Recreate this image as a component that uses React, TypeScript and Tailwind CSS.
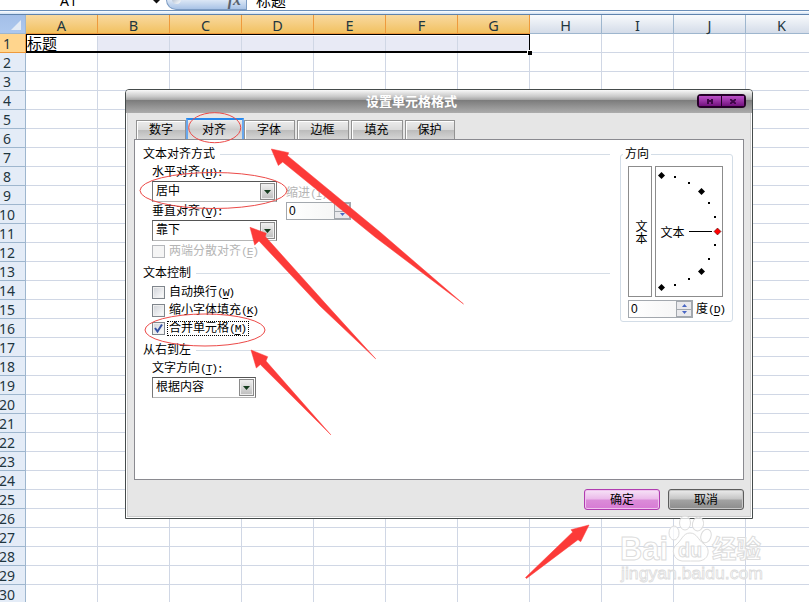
import React from "react";

const columns = ["A", "B", "C", "D", "E", "F", "G", "H", "I", "J", "K"];
const rows = Array.from({ length: 30 }, (_, i) => i + 1);

function FormulaBar() {
  return (
    <div className="flex h-[11px] shrink-0 overflow-hidden border-b border-[#6b8fb9] bg-white text-[15px] leading-[18px]">
      <div className="flex w-[166px] items-start">
        <span className="-mt-[8px] ml-[60px] w-[92px] font-['Noto_Sans',sans-serif] text-[14px]">A1</span>
        <svg width="9" height="4" viewBox="0 0 9 4">
          <path d="M1 0h7L4.500 3.500z" fill="#111" />
        </svg>
      </div>
      <div className="flex w-[81px] justify-between rounded-bl-[10px] border-b border-l border-r border-[#7d9cc4] bg-gradient-to-b from-[#dce7f5] to-[#a9c3e6] pl-[5px] pr-[5px]">
        <span className="-mt-[5px] h-[9px] w-[9px] rounded-full bg-gradient-to-br from-[#9fb0c5] to-white" />
        <span className="-mt-[9px] font-['Liberation_Serif',serif] text-[16px] font-bold italic leading-[18px] text-[#59616d]">fx</span>
      </div>
      <span className="-mt-[8px] ml-[9px]">标题</span>
    </div>
  );
}

function Sheet() {
  return (
    <div className="flex flex-col">
      <div className="flex h-[19px] font-['Noto_Sans',sans-serif] text-[14.5px] leading-[20px] text-[#1f363f]">
        <div className="flex w-[26px] shrink-0 items-end justify-end border-b border-r border-[#9eb6ce] bg-gradient-to-b from-[#a3bfe8] to-[#adc8ee] pb-[3px] pr-[4px]">
          <svg width="10" height="10">
            <path d="M10 0v10H0z" fill="#e4ebf5" />
          </svg>
        </div>
        {columns.map((c, i) => (
          <div
            key={c}
            className={
              i < 7
                ? "w-[72px] shrink-0 border-b border-r border-[#ee9a3c] bg-gradient-to-b from-[#f9d99f] to-[#f1c15f] text-center"
                : "w-[72px] shrink-0 border-b border-r border-[#9eb6ce] bg-gradient-to-b from-[#f8fafc] to-[#d4dce9] text-center"
            }
          >
            {c}
          </div>
        ))}
      </div>
      {rows.map((r) => (
        <div key={r} className="flex h-[19px] shrink-0">
          <div
            className={
              r === 1
                ? "flex w-[26px] shrink-0 justify-center border-b border-r border-[#ee9a3c] bg-[#ffd58d] pr-[11px] font-['Noto_Sans',sans-serif] text-[14px] leading-[20px] text-[#1f363f]"
                : "flex w-[26px] shrink-0 justify-center border-b border-r border-[#9eb6ce] bg-[#e4ecf7] pr-[11px] font-['Noto_Sans',sans-serif] text-[14px] leading-[20px] text-[#1f363f]"
            }
          >
            {r}
          </div>
          {columns.map((c, i) => (
            <div
              key={c}
              className={
                r === 1 && i > 0 && i < 7
                  ? "w-[72px] shrink-0 border-b border-r border-[#d0d7e5] bg-[#e8eaf5]"
                  : "w-[72px] shrink-0 border-b border-r border-[#d0d7e5] text-[15px] leading-[19px]"
              }
            >
              {r === 1 && i === 0 && <span className="ml-[1px]">标题</span>}
            </div>
          ))}
        </div>
      ))}
    </div>
  );
}

function Key({ k, colon }: { k: string; colon?: boolean }) {
  return (
    <span className="font-['Liberation_Mono',monospace] text-[11.5px] tracking-[-1.3px]">
      (<span className="underline underline-offset-2">{k}</span>){colon ? ":" : ""}
    </span>
  );
}

function Heading({ children }: { children: React.ReactNode }) {
  return (
    <div className="flex h-4 items-center gap-[5px]">
      <span className="pl-px">{children}</span>
      <span className="h-px flex-1 bg-[#d5dde6]" />
    </div>
  );
}

function Select({ value, width }: { value: string; width: string }) {
  return (
    <div className={"flex h-[21px] items-center justify-between border border-b-[#b5b5b5] border-l-[#777] border-r-[#777] border-t-[#555] bg-white pl-[3px] pr-[1px] " + width}>
      <span className="-mt-px">{value}</span>
      <span className="flex h-[17px] w-[15px] items-center justify-center border border-[#8a8a8a] bg-gradient-to-b from-[#f1f1f1] to-[#bdbdbd] shadow-[inset_0_0_0_1px_#eee]">
        <svg width="7" height="4">
          <path d="M0 0h7L3.500 4z" fill="#173d20" />
        </svg>
      </span>
    </div>
  );
}

function Check({ checked, disabled }: { checked?: boolean; disabled?: boolean }) {
  return (
    <span
      className={
        disabled
          ? "flex h-[13px] w-[13px] border border-[#b5b7bb] bg-[#f5f5f5]"
          : "flex h-[13px] w-[13px] border border-[#7f858c] bg-gradient-to-br from-[#cfd2d8] to-white shadow-[inset_0_0_0_1px_#f0f0f0]"
      }
    >
      {checked && (
        <svg width="11" height="11" viewBox="0 0 11 11">
          <path d="M2 5L4.500 8.500L9 1.500" fill="none" stroke="#3450a4" strokeWidth="2" />
        </svg>
      )}
    </span>
  );
}

function Spinner() {
  return (
    <div className="flex h-[18px] w-[65px] items-center justify-between border border-[#a3a8ae] bg-gradient-to-r from-white to-[#f3f3f3] pl-[2px]">
      <span className="font-['Liberation_Sans',sans-serif] text-[12px]">0</span>
      <span className="flex h-4 w-[16px] flex-col gap-px bg-[#a3a8ae] py-px pl-px pr-px">
        <span className="flex flex-1 items-center justify-center bg-[#e9e9ec]">
          <svg width="5" height="3"><path d="M0 3h5L2.500 0z" fill="#4a67c4" /></svg>
        </span>
        <span className="flex flex-1 items-center justify-center bg-[#e9e9ec]">
          <svg width="5" height="3"><path d="M0 0h5L2.500 3z" fill="#4a67c4" /></svg>
        </span>
      </span>
    </div>
  );
}

const bigDots = [[6.5, 9.5], [46.5, 25.5], [46.5, 105.5], [6.5, 121.5]];
const smallDots = [[20, 11], [34, 17], [54, 37], [60, 51], [60, 79], [54, 93], [34, 113], [20, 119]];

function Orientation() {
  return (
    <div className="ml-[10px] mt-[6px] w-[113px]">
      <fieldset className="h-[176px] min-w-0 rounded-[3px] border border-[#d3dde7] pl-[7px]">
        <legend className="-ml-[5px] h-4 px-[2px] leading-4">方向</legend>
        <div className="mt-[4px] flex gap-[3px]">
          <div className="flex h-[131px] w-6 items-center justify-center border border-[#8c8c8c]">
            <span className="leading-4 [writing-mode:vertical-rl]">文本</span>
          </div>
          <div className="h-[131px] w-[68px] border border-[#8c8c8c]">
            <svg width="66" height="129" viewBox="1 1 66 129">
              {bigDots.map(([x, y]) => (
                <path key={x + "," + y} d={`M${x - 3.5} ${y}L${x} ${y - 3.5}L${x + 3.5} ${y}L${x} ${y + 3.5}z`} />
              ))}
              {smallDots.map(([x, y]) => (
                <rect key={x + "," + y} x={x - 1} y={y - 1} width="2" height="2" />
              ))}
              <text x="5.500" y="71" fontSize="12">文本</text>
              <path d="M34 65.500h23" stroke="#000" />
              <path d="M59 65.500L62.500 62L66 65.500L62.500 69z" fill="#f00" stroke="#300" strokeWidth=".5" />
            </svg>
          </div>
        </div>
        <div className="mt-[3px] flex items-center gap-[3px]">
          <Spinner />
          <span className="whitespace-nowrap">度<Key k="D" /></span>
        </div>
      </fieldset>
    </div>
  );
}

function Tab({ label, style }: { label: string; style: string }) {
  return (
    <div className={"flex h-[19px] items-center justify-center border border-b-0 border-[#929292] bg-[linear-gradient(#ececec,#dadada_50%,#bcbcbc_52%,#d4d4d4)] shadow-[inset_1px_1px_0_#fff] " + style}>
      {label}
    </div>
  );
}

function Dialog() {
  return (
    <div className="absolute left-[125px] top-[89px] flex h-[430px] w-[628px] flex-col rounded-t-[4px] border border-[#454b4b] bg-[#e6e6e6] text-[12px] leading-4 shadow-[inset_1px_0_0_#fff,inset_-1px_-1px_0_#fff,inset_2px_0_0_#ccc,inset_-2px_-2px_0_#ccc]">
      <div className="flex h-[23px] shrink-0 rounded-t-[3px] bg-[linear-gradient(#f8f8f8,#c9c9c9_28%,#a5a5a5_43%,#7c7c7c_45%,#acacac)]">
        <span className="w-[571px] pt-[4px] text-center text-[13px] font-bold leading-4 text-white">设置单元格格式</span>
        <div className="mt-[4px] flex h-[14px] w-[49px] rounded-[4px] border-2 border-[#260029] bg-[#260029]">
          <span className="flex flex-1 items-center justify-center bg-gradient-to-b from-[#bd50c9] to-[#73107f]">
            <svg width="6" height="5"><path d="M0 0h2v1h2V0h2v5H4V3H2v2H0z" fill="#3d0646" /></svg>
          </span>
          <span className="ml-px flex flex-1 items-center justify-center bg-gradient-to-b from-[#bd50c9] to-[#73107f]">
            <svg width="6" height="5"><path d="M0 0l6 5M6 0L0 5" stroke="#3d0646" strokeWidth="1.800" /></svg>
          </span>
        </div>
      </div>
      <div className="mx-[8px] flex h-[26px] shrink-0 items-end pl-[2px]">
        <Tab label="数字" style="w-[50px]" />
        <div className="flex h-[21px] w-[58px] items-center justify-center border-2 border-b-0 border-[#2488ee] border-x-[#68a7ed] bg-gradient-to-b from-[#eee] via-[#ccc] to-[#e2e2e2] pr-[2px]">对齐</div>
        <Tab label="字体" style="w-[51px] pr-px" />
        <Tab label="边框" style="ml-[2px] w-[52px] pr-px" />
        <Tab label="填充" style="ml-[2px] w-[52px] pr-px" />
        <Tab label="保护" style="ml-[2px] w-[50px] pr-px" />
      </div>
      <div className="mx-[8px] flex h-[341px] shrink-0 border border-[#8a8a90] bg-white">
        <div className="flex w-[475px] shrink-0 flex-col pl-[7px] pt-[6px]">
          <Heading>文本对齐方式</Heading>
          <div className="mt-[2px] flex pl-[10px]">
            <div className="w-[134px]">
              <div className="h-[17px]">水平对齐<Key k="H" colon /></div>
              <Select value="居中" width="w-[125px]" />
              <div className="mt-px h-[17px]">垂直对齐<Key k="V" colon /></div>
              <Select value="靠下" width="w-[125px]" />
            </div>
            <div className="pt-[21px]">
              <div className="h-[17px] text-[#b5b5b5]">缩进<Key k="I" colon /></div>
              <Spinner />
            </div>
          </div>
          <div className="mt-[2px] flex h-4 items-center gap-1 pl-[10px] text-[#b5b5b5]">
            <Check disabled />
            <span>两端分散对齐<Key k="E" /></span>
          </div>
          <div className="mt-[6px]"><Heading>文本控制</Heading></div>
          <div className="mt-[3px] flex flex-col gap-[2px] pl-[10px]">
            <div className="flex h-4 items-center gap-1"><Check /><span>自动换行<Key k="W" /></span></div>
            <div className="flex h-4 items-center gap-1"><Check /><span>缩小字体填充<Key k="K" /></span></div>
            <div className="flex h-4 items-center gap-[2px]">
              <Check checked />
              <span className="h-[15px] w-[82px] whitespace-nowrap border border-dotted border-black px-px leading-[13px]">合并单元格<Key k="M" /></span>
            </div>
          </div>
          <div className="mt-[6px]"><Heading>从右到左</Heading></div>
          <div className="mt-[2px] pl-[10px]">
            <div className="h-[17px]">文字方向<Key k="T" colon /></div>
            <Select value="根据内容" width="w-[104px]" />
          </div>
        </div>
        <Orientation />
      </div>
      <div className="flex justify-end gap-2 pr-[8px] pt-[9px]">
        <button className="h-[21px] w-[76px] rounded-[3px] border border-[#b03cb0] bg-[linear-gradient(#f7e3f7,#ebb9ea_48%,#db8cd9_52%,#d77bd4)] shadow-[inset_0_0_0_1px_#efc4ee]">确定</button>
        <button className="h-[21px] w-[76px] rounded-[3px] border border-[#5c5c5c] bg-[linear-gradient(#ececec,#c4c4c4_48%,#a3a3a3_52%,#8c8c8c)] shadow-[inset_0_0_0_1px_#c8c8c8]">取消</button>
      </div>
    </div>
  );
}

function Annotations() {
  return (
    <svg className="pointer-events-none absolute left-0 top-0" width="809" height="602">
      <g fill="none" stroke="#ec4a48" strokeWidth="1">
        <ellipse cx="214.700" cy="127.700" rx="26" ry="15" />
        <ellipse cx="213.500" cy="190.500" rx="73.500" ry="18" />
        <ellipse cx="205" cy="330" rx="60" ry="16" />
      </g>
      <g fill="#fc3a38" stroke="#fc3a38" strokeWidth=".5">
        <path d="M271.300 149L288.700 152.700L287.500 155.700L380 232L463.500 304L375 237L282.700 162L278.300 165.500z" />
        <path d="M250 227.300L266.300 233.300L265.300 236.500L325 303L375.700 358.800L320 306L259 241L254.700 245z" />
        <path d="M251 350L267.700 356.700L266 361L330.800 434.800L260.300 364.500L256.300 368z" />
        <path d="M589 525L580.700 541.700L578 539.700L526.500 578.500L525.500 577.500L572.700 532L571 529.700z" />
      </g>
      <g fill="#fff" fillOpacity=".75" stroke="#dcdcdc" strokeWidth="1">
        <text x="620" y="560" fontSize="33" fontWeight="bold" textLength="48" lengthAdjust="spacingAndGlyphs" fontFamily="Liberation Sans, sans-serif">Bai</text>
        <ellipse cx="674" cy="533" rx="5" ry="7" />
        <ellipse cx="685" cy="523" rx="5.500" ry="7" />
        <ellipse cx="698" cy="524" rx="5.500" ry="7" transform="rotate(12 698 524)" />
        <ellipse cx="706" cy="536" rx="5" ry="7" transform="rotate(20 706 536)" />
        <path d="M690 533C683 533 682 540 676 545C671 549 673 560 682 561C688 561 693 561 699 561C709 560 711 549 704 544C698 540 697 533 690 533z" />
        <text x="678" y="557" fontSize="20" fontWeight="bold" textLength="24" lengthAdjust="spacingAndGlyphs" fontFamily="Liberation Sans, sans-serif">du</text>
        <text x="712" y="558" fontSize="25" fontWeight="bold" textLength="49" lengthAdjust="spacingAndGlyphs">经验</text>
        <text x="621" y="579" fontSize="17" strokeWidth=".8" textLength="142" lengthAdjust="spacingAndGlyphs" fontFamily="Liberation Sans, sans-serif">jingyan.baidu.com</text>
      </g>
    </svg>
  );
}

export default function App() {
  return (
    <div className="relative flex h-[602px] w-[809px] flex-col overflow-hidden bg-white font-['Liberation_Sans','Noto_Sans_CJK_SC',sans-serif] text-black">
      <FormulaBar />
      <div className="h-[4px] shrink-0 border-b border-[#5f83ad] bg-gradient-to-b from-white to-[#cfe0f3]" />
      <Sheet />
      {/* Selection frame around A1:G1 with its fill handle */}
      <div className="absolute left-[26px] top-[34px] h-[19px] w-[504px] border border-b-2 border-black shadow-[inset_0_1px_0_#fff]" />
      <div className="absolute left-[527px] top-[50px] h-[5px] w-[5px] border-l border-t border-white bg-black" />
      <Dialog />
      <Annotations />
    </div>
  );
}
